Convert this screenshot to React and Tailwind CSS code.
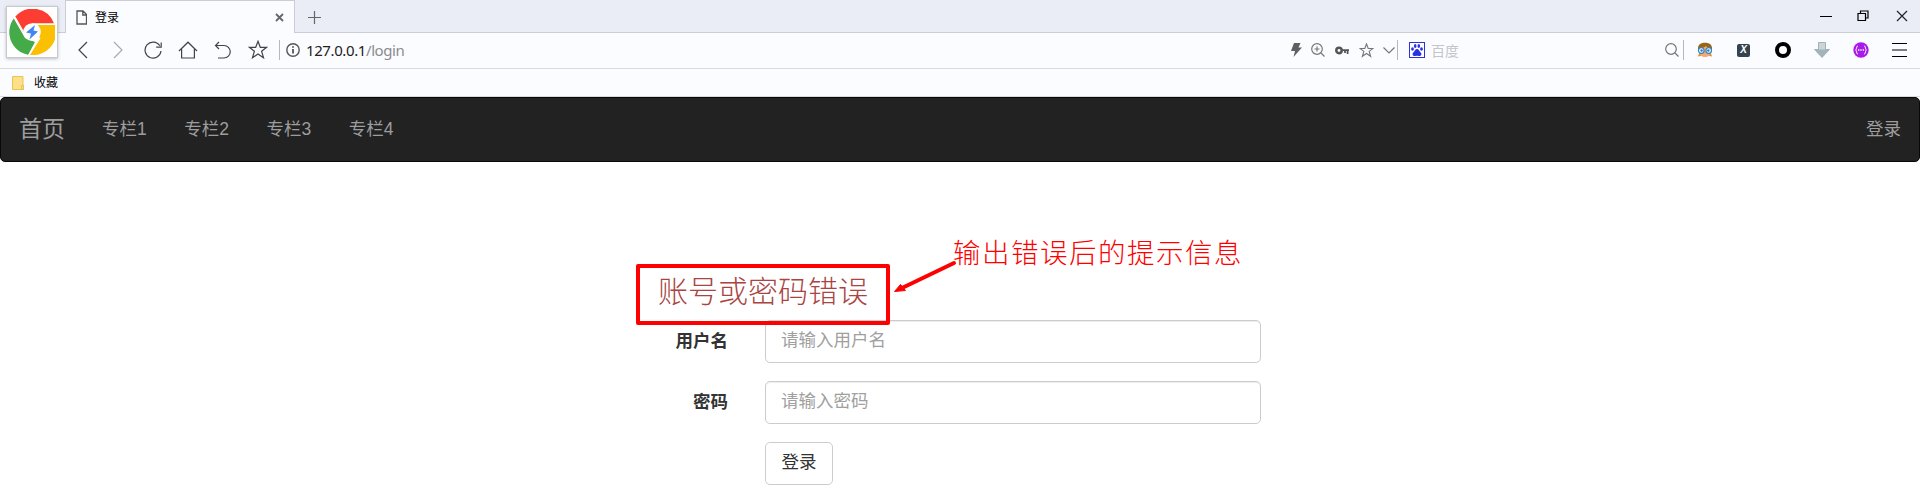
import React from "react";

const Icon = ({ w = 20, h = 20, vb, sw = 1.2, className = "text-[#444]", children }) => (
  <svg width={w} height={h} viewBox={vb || `0 0 ${w} ${h}`} fill="none" stroke="currentColor" strokeWidth={sw} className={`shrink-0 ${className}`}>
    {children}
  </svg>
);

const Cell = ({ children }) => <span className="flex w-[35px] shrink-0 justify-center">{children}</span>;
const SmallCell = ({ children }) => <span className="flex w-6 shrink-0 justify-center">{children}</span>;
const ExtCell = ({ children }) => <span className="flex w-[39px] shrink-0 justify-center">{children}</span>;

const STAR = "M10 1.3l2.3 6h6.3l-5 3.9 1.9 6.5L10 13.9l-5.5 3.8 1.9-6.5-5-3.9h6.3z";

function Logo() {
  return (
    <div className="absolute left-[6px] top-[6px] z-10 flex h-[52px] w-[52px] items-center justify-center border border-[#c9cacc] bg-white shadow-[0_1px_3px_rgba(0,0,0,0.25)]">
      <svg width="46" height="46" viewBox="0 0 46 46" className="shrink-0">
        <path d="M6 8A23 23 0 0 1 45.300 15L23 15L15 23L13.500 22.500Z" fill="#fd3c32" />
        <path d="M46 16A23 23 0 0 1 21 45.900L30.500 29L29 16Z" fill="#fbc003" />
        <path d="M4.800 9.500A23 23 0 0 0 19.200 45.800L26 33L16 29Z" fill="#45ab49" />
        <path d="M6 8l9 16M23 14.800h22.500M31 29l-11 17" stroke="#fff" strokeWidth="1.300" fill="none" />
        <circle cx="23" cy="23" r="8.800" fill="#fff" />
        <path d="M26 16l-9 7.500 5 1-1.500 6 8.500-8-4.500-1z" fill="#4285f4" />
      </svg>
    </div>
  );
}

function TitleBar() {
  return (
    <div className="flex h-[33px] border-b border-[#cbccd4] bg-[#eaedf6]">
      <div className="ml-[65px] flex h-[33px] w-[230px] shrink-0 items-center border-x border-t border-[#cbccd4] bg-[#fbfcff] pl-[10px] pr-[10px]">
        <Icon w={11} h={15} sw={1.3} className="text-[#555]">
          <path d="M1 1h6l3.500 3.500V14H1zM6.800 1v4h3.700" />
        </Icon>
        <span className="ml-[8px] flex-1 pb-px font-['Noto_Sans_CJK_SC',sans-serif] text-[12px] leading-4 text-black">登录</span>
        <Icon w={9} h={9} sw={1.8} className="text-[#666]">
          <path d="M1 1l7 7M8 1l-7 7" />
        </Icon>
      </div>
      <div className="ml-[12px] flex flex-1 items-center pt-[2px]">
        <Icon w={15} h={15} className="text-[#666]">
          <path d="M7.500 1v13M1 7.500h13" />
        </Icon>
      </div>
      <div className="flex items-center pr-[12px]">
        <Icon w={12} h={12} sw={1} className="text-black"><path d="M0 6.500h12" /></Icon>
        <Icon w={12} h={12} className="ml-[25px] text-black">
          <path d="M1 3.500h7.500v7H1zM3.500 3.500V1h7.500v7H8.500" />
        </Icon>
        <Icon w={12} h={12} className="ml-[27px] text-[#222]">
          <path d="M1 1l10 10M11 1L1 11" />
        </Icon>
      </div>
    </div>
  );
}

function Toolbar() {
  return (
    <div className="flex h-9 items-center border-b border-[#d9dadd] bg-[#fbfcff] pb-px pl-[65px]">
      <Cell><Icon w={10} h={18}><path d="M9 1L1 9l8 8" /></Icon></Cell>
      <Cell><Icon w={10} h={18} className="text-[#aaa]"><path d="M1 1l8 8-8 8" /></Icon></Cell>
      <Cell>
        <Icon w={18} h={18}><path d="M15.800 4.800A8 8 0 1 0 17 10M17.200 1.500v4.700h-5" /></Icon>
      </Cell>
      <Cell>
        <Icon w={20} h={18}><path d="M1 10l9-8.800L19 10M3.600 8v9h12.800V8" /></Icon>
      </Cell>
      <Cell>
        <Icon w={17} h={18}><path d="M5 1L1.500 4.500 5 8M1.500 4.500H10a6 6 0 0 1 0 12.500H4" /></Icon>
      </Cell>
      <Cell><Icon w={20} h={20}><path d={STAR} /></Icon></Cell>
      <span className="ml-[4px] h-5 w-px bg-[#b7b8bb]" />
      <Icon w={14} h={14} sw={1.4} className="ml-[6px] text-[#555]">
        <circle cx="7" cy="7" r="6.200" />
        <path d="M7 6v4.500M7 3.200v1.600" strokeWidth="1.800" />
      </Icon>
      <span className="ml-[6px] w-[976px] pb-px font-['Noto_Sans',sans-serif] text-[15px] leading-5 tracking-[-0.400px] text-[#8a8b8e]">
        <span className="text-[#222]">127.0.0.1</span>/login
      </span>
      <SmallCell>
        <Icon w={11} h={14} sw={0} className="ml-[5px] text-[#606060]">
          <path d="M3 0h6.500L7.500 4.500H11L2.500 14 4 8H0z" fill="currentColor" />
        </Icon>
      </SmallCell>
      <SmallCell>
        <Icon w={14} h={14} className="text-[#777]">
          <circle cx="6" cy="6" r="5.300" /><path d="M10 10l3.500 3.500M3.500 6h5M6 3.500v5" />
        </Icon>
      </SmallCell>
      <SmallCell>
        <Icon w={14} h={9} sw={2.5} className="text-[#555]">
          <circle cx="4" cy="4.500" r="2.700" /><path d="M7 4.200h7M12.600 4v4M10 4v3" strokeWidth="1.800" />
        </Icon>
      </SmallCell>
      <SmallCell><Icon w={15} h={15} vb="0 0 20 20" sw={1.5} className="text-[#777]"><path d={STAR} /></Icon></SmallCell>
      <SmallCell><Icon w={12} h={7} className="-ml-[3px] text-[#777]"><path d="M.5.500L6 6 11.500.500" /></Icon></SmallCell>
      <span className="-ml-[5px] h-5 w-px shrink-0 bg-[#b7b8bb]" />
      <svg width="16" height="16" viewBox="0 0 16 16" className="ml-[11px] shrink-0">
        <rect x=".5" y=".5" width="15" height="15" fill="#fff" stroke="#2932e1" />
        <g fill="#2932e1">
          <ellipse cx="3.500" cy="7" rx="1.400" ry="1.800" /><ellipse cx="6.200" cy="4" rx="1.300" ry="1.900" />
          <ellipse cx="9.800" cy="4" rx="1.300" ry="1.900" /><ellipse cx="12.500" cy="7" rx="1.400" ry="1.800" />
          <path d="M8 7C6 7 6 9 4.500 10.300 2.500 12.200 4 14.300 6 14q2-.3 4 0c2 .3 3.500-1.800 1.500-3.700C10 9 10 7 8 7z" />
        </g>
      </svg>
      <span className="ml-[6px] flex-1 pb-px font-['Noto_Sans_CJK_SC',sans-serif] text-[14px] leading-5 text-[#c4c5c8]">百度</span>
      <Icon w={14} h={14} className="text-[#777]">
        <circle cx="6" cy="6" r="5.300" /><path d="M10 10l3.500 3.500" />
      </Icon>
      <span className="ml-[4px] h-5 w-px shrink-0 bg-[#b7b8bb]" />
      <div className="ml-px mr-px flex shrink-0 items-center">
        <ExtCell>
          <svg width="16" height="16" viewBox="0 0 16 16">
            <path d="M1 14.500l2-6h10l2 6q-3 0-4-2H5q-1 2-4 2z" fill="#d98f2b" />
            <path d="M1 8C.5 3 3 .8 8 .8S15.500 3 15 8z" fill="#9a6412" />
            <path d="M2.500 6.500Q7 6 9 4q2 2.500 4.500 2.500V10q0 5-5.500 5t-5.500-5z" fill="#f5a873" />
            <circle cx="4.300" cy="8.500" r="2.800" fill="#fff" stroke="#2c86c9" strokeWidth="1.200" />
            <circle cx="11.700" cy="8.500" r="2.800" fill="#fff" stroke="#2c86c9" strokeWidth="1.200" />
            <circle cx="4.600" cy="8.500" r="1.200" fill="#2b78b5" /><circle cx="11.400" cy="8.500" r="1.200" fill="#2b78b5" />
          </svg>
        </ExtCell>
        <ExtCell>
          <span className="flex h-[13px] w-[13px] items-center justify-center rounded-[2px] bg-[#34444f] font-['Liberation_Sans',sans-serif] text-[10px] font-bold italic leading-none text-white">X</span>
        </ExtCell>
        <ExtCell><span className="h-4 w-4 rounded-full border-[4.500px] border-black bg-white" /></ExtCell>
        <ExtCell>
          <svg width="16" height="16" viewBox="0 0 16 16">
            <path d="M4.500.5h7v7h4L8 15.500.5 7.500h4z" fill="#9fb5bb" stroke="#91a3a8" strokeWidth=".7" />
            <path d="M5 1h6v6.500H5z" fill="#cdd4d6" />
          </svg>
        </ExtCell>
        <ExtCell>
          <svg width="16" height="16" viewBox="0 0 16 16">
            <circle cx="8" cy="8" r="7.700" fill="#a91bea" />
            <path d="M5 4q-1.500 0-1.500 2T2.500 8q1 0 1 2T5 12M11 4q1.500 0 1.500 2t1 2q-1 0-1 2T11 12" fill="none" stroke="#fff" strokeWidth=".9" />
            <path d="M5 8h1.300M7.300 8h1.300M9.700 8H11" stroke="#fff" strokeWidth="1.300" />
          </svg>
        </ExtCell>
        <ExtCell><Icon w={15} h={14} sw={1} className="text-black"><path d="M0 .5h15M0 7h15M0 13.500h15" /></Icon></ExtCell>
      </div>
    </div>
  );
}

function Bookmarks() {
  return (
    <div className="flex h-7 items-center border-b border-[#d9dadd] bg-[#fbfcff] pl-3">
      <svg width="12" height="14" viewBox="0 0 12 14">
        <path d="M.5.500h10.500v13H.5z" fill="#fee08a" stroke="#eac54e" />
        <path d="M9.500 9.500h2v4h-2z" fill="#fee08a" stroke="#e5b93a" strokeWidth=".8" />
      </svg>
      <span className="ml-[10px] pb-px font-['Noto_Sans_CJK_SC',sans-serif] text-[12px] leading-4 text-black">收藏</span>
    </div>
  );
}

function Navbar() {
  return (
    <nav className="flex h-[65px] items-center rounded-[5px] border border-[#080808] bg-[#222] px-[18px] text-[17.500px] leading-[25px] text-[#9d9d9d]">
      <a className="text-[23px]">首页</a>
      <div className="ml-[37px] flex flex-1 gap-[37.500px]">
        <a>专栏1</a>
        <a>专栏2</a>
        <a>专栏3</a>
        <a>专栏4</a>
      </div>
      <a>登录</a>
    </nav>
  );
}

const Field = ({ label, placeholder }) => (
  <div className="flex h-[43px] items-center">
    <label className="w-[129px] shrink-0 pb-px pr-[37px] text-right font-bold">{label}</label>
    <input
      placeholder={placeholder}
      className="h-[43px] w-[496px] rounded-[5px] border border-[#ccc] bg-white pb-[2px] pl-[15px] pr-4 shadow-[inset_0_1px_1px_rgba(0,0,0,0.075)] placeholder:text-[#a0a0a0]"
    />
  </div>
);

function Annotation() {
  return (
    <>
      <div className="absolute left-[636px] top-[264px] h-[61px] w-[254px] rounded-[2px] border-4 border-[#fe0000]" />
      <svg className="absolute left-[893px] top-[260px]" width="64" height="34" viewBox="0 0 64 34">
        <path d="M61 3L9 28" stroke="#fe0000" strokeWidth="4" strokeLinecap="round" />
        <path d="M1.500 31.500L7.500 24.500 12.500 30.500z" fill="#fe0000" stroke="#fe0000" strokeLinejoin="round" />
      </svg>
      <div className="absolute left-[953px] top-[234px] whitespace-nowrap text-[27.500px] font-light leading-10 tracking-[1.500px] text-[#fe0000]">
        输出错误后的提示信息
      </div>
    </>
  );
}

export default function App() {
  return (
    <div className="relative h-[500px] w-[1920px] overflow-hidden bg-white font-['Liberation_Sans','Noto_Sans_CJK_SC',sans-serif] text-[#333]">
      <Logo />
      <TitleBar />
      <Toolbar />
      <Bookmarks />
      <Navbar />
      <form className="ml-[636px] flex w-[625px] flex-col pt-[113px] text-[17.500px] leading-[25px]">
        <h3 className="mb-[12px] pl-[22px] text-[30px] font-light leading-[33px] text-[#a94442]">账号或密码错误</h3>
        <div className="flex flex-col gap-[18px]">
          <Field label="用户名" placeholder="请输入用户名" />
          <Field label="密码" placeholder="请输入密码" />
          <button type="button" className="ml-[129px] h-[43px] w-[68px] rounded-[5px] border border-[#ccc] bg-white pb-[2px]">
            登录
          </button>
        </div>
      </form>
      <Annotation />
    </div>
  );
}
